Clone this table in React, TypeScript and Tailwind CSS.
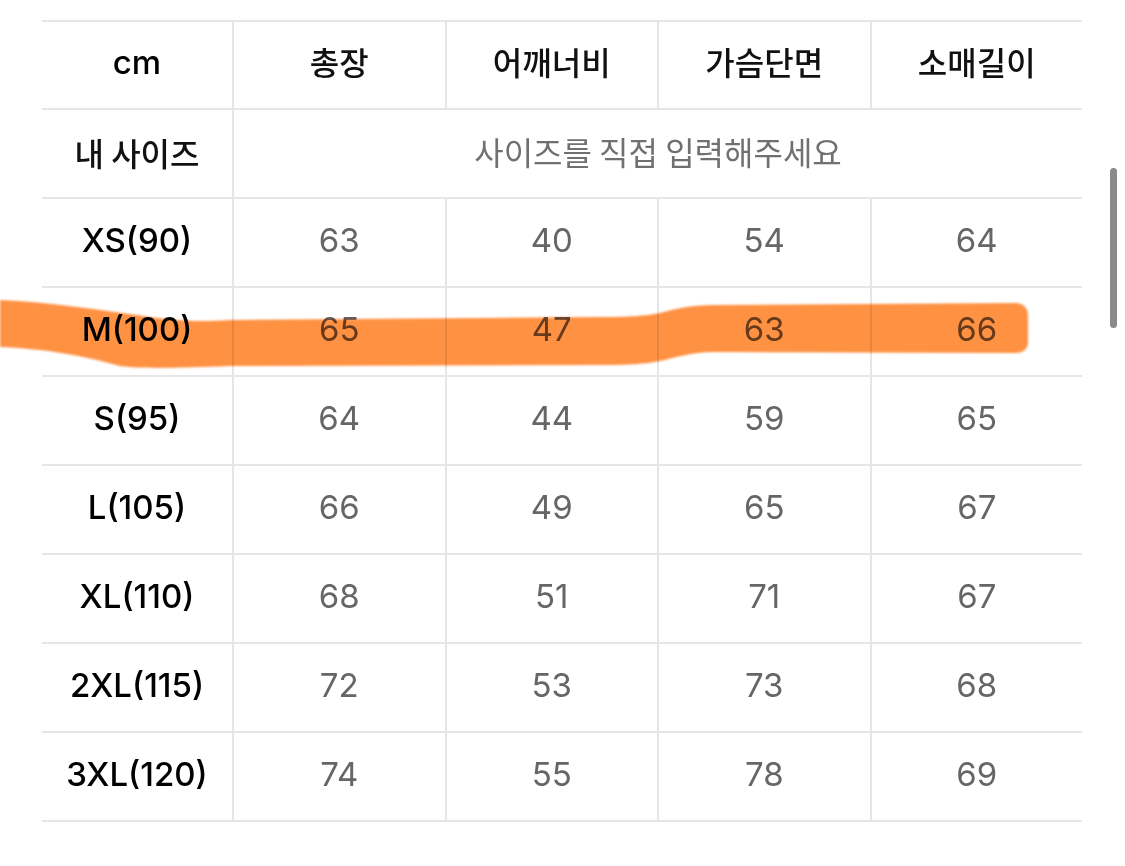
const headers = ["총장", "어깨너비", "가슴단면", "소매길이"];

const rows = [
  { size: "XS(90)", values: ["63", "40", "54", "64"] },
  { size: "M(100)", values: ["65", "47", "63", "66"] },
  { size: "S(95)", values: ["64", "44", "59", "65"] },
  { size: "L(105)", values: ["66", "49", "65", "67"] },
  { size: "XL(110)", values: ["68", "51", "71", "67"] },
  { size: "2XL(115)", values: ["72", "53", "73", "68"] },
  { size: "3XL(120)", values: ["74", "55", "78", "69"] },
];

const latin = "font-['Inter','Noto_Sans_CJK_KR',sans-serif]";
const korean = "font-['Noto_Sans_CJK_KR',sans-serif]";

export default function App() {
  return (
    <div className="relative min-h-screen w-full overflow-hidden bg-white">
      {/* size table */}
      <div className="ml-[42px] pt-[20px] w-[1040px]">
        <div className="grid grid-cols-[190px_repeat(4,1fr)] border-b-2 border-[#e6e6e6]">
          {/* header */}
          <div className={`h-[88px] pb-[4px] border-t-2 border-[#e6e6e6] flex items-center justify-center text-[33px] font-medium text-black ${latin}`}>
            cm
          </div>
          {headers.map((h) => (
            <div
              key={h}
              className={`h-[88px] pb-[8px] border-t-2 border-l-2 border-[#e6e6e6] flex items-center justify-center text-[32px] font-medium text-[#111] ${korean}`}
            >
              {h}
            </div>
          ))}

          {/* my size */}
          <div className={`h-[89px] pb-[4px] border-t-2 border-[#e6e6e6] flex items-center justify-center text-[32px] font-medium text-[#111] ${korean}`}>
            내 사이즈
          </div>
          <div className={`col-span-4 h-[89px] pb-[5px] border-t-2 border-l-2 border-[#e6e6e6] flex items-center justify-center text-[32px] text-[#707070] ${korean}`}>
            사이즈를 직접 입력해주세요
          </div>

          {rows.map((r) => (
            <Row key={r.size} size={r.size} values={r.values} />
          ))}
        </div>
      </div>

      {/* orange marker stroke */}
      <svg
        className="pointer-events-none absolute left-0 top-0 mix-blend-multiply"
        width="1125"
        height="866"
        viewBox="0 0 1125 866"
      >
        <defs>
          <filter id="soft">
            <feGaussianBlur stdDeviation="1.2" />
          </filter>
        </defs>
        <path
          d="M0,300 C50,302 100,310 150,317 C180,321 200,322 230,320 L600,317 C630,317 645,316 660,313 C675,309 690,305 715,305 L1015,303 Q1027,303 1028,315 L1028,343 Q1027,353 1015,353 L715,352 C690,352 675,358 660,361 C645,364 630,365 600,365 L230,366 C180,368 140,369 120,366 C90,358 60,350 0,347 Z"
          fill="#ff9143"
          filter="url(#soft)"
        />
      </svg>

      {/* scrollbar */}
      <div className="absolute left-[1110px] top-[168px] h-[160px] w-[7px] rounded-full bg-[#8a8a8a]" />
    </div>
  );
}

function Row({ size, values }: { size: string; values: string[] }) {
  return (
    <>
      <div className={`h-[89px] pb-[3px] border-t-2 border-[#e6e6e6] flex items-center justify-center text-[33px] font-medium text-black ${latin}`}>
        {size}
      </div>
      {values.map((v, i) => (
        <div
          key={i}
          className={`h-[89px] pb-[3px] border-t-2 border-l-2 border-[#e6e6e6] flex items-center justify-center text-[33px] text-[#666] ${latin}`}
        >
          {v}
        </div>
      ))}
    </>
  );
}
